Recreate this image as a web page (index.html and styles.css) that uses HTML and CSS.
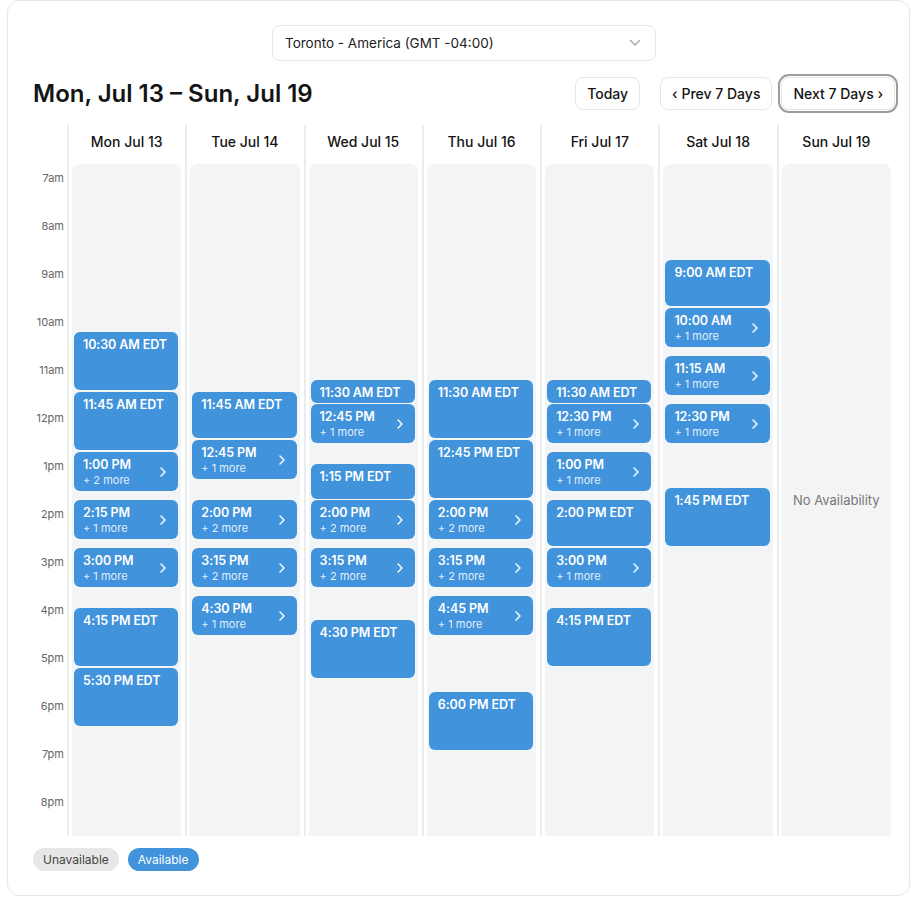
FILE: index.html
```html
<!DOCTYPE html>
<html lang="en">
<head>
  <meta charset="UTF-8" />
  <meta name="viewport" content="width=device-width, initial-scale=1" />
  <title>Availability</title>
  <link rel="stylesheet" href="styles.css">
</head>
<body>
  <div class="card">
    <div class="tz-row">
      <div class="tz-select">
        <span>Toronto - America (GMT -04:00)</span>
        <svg width="12" height="8" viewBox="0 0 12 8"><path d="M1.5 1.5l4.5 4.5 4.5-4.5" fill="none" stroke="#a3a3a3" stroke-width="1.3" stroke-linecap="round" stroke-linejoin="round"/></svg>
      </div>
    </div>

    <div class="toolbar">
      <h1>Mon, Jul 13 – Sun, Jul 19</h1>
      <div class="nav">
        <button class="today">Today</button>
        <button>‹ Prev 7 Days</button>
        <button class="focused">Next 7 Days ›</button>
      </div>
    </div>

    <div class="week" id="week">
      <div class="gutter">
        <div class="gutter-head"></div>
        <div class="hour">7am</div>
        <div class="hour">8am</div>
        <div class="hour">9am</div>
        <div class="hour">10am</div>
        <div class="hour">11am</div>
        <div class="hour">12pm</div>
        <div class="hour">1pm</div>
        <div class="hour">2pm</div>
        <div class="hour">3pm</div>
        <div class="hour">4pm</div>
        <div class="hour">5pm</div>
        <div class="hour">6pm</div>
        <div class="hour">7pm</div>
        <div class="hour">8pm</div>
      </div>
    </div>

    <div class="legend">
      <span class="pill off">Unavailable</span>
      <span class="pill on">Available</span>
    </div>
  </div>

  <script>
    // [top, height, time, extra]
    const days = [
      { label: 'Mon Jul 13', slots: [
        [168, 58, '10:30 AM EDT'], [228, 58, '11:45 AM EDT'], [288, 39, '1:00 PM', 2],
        [336, 39, '2:15 PM', 1], [384, 39, '3:00 PM', 1], [444, 58, '4:15 PM EDT'], [504, 58, '5:30 PM EDT']
      ]},
      { label: 'Tue Jul 14', slots: [
        [228, 46, '11:45 AM EDT'], [276, 39, '12:45 PM', 1], [336, 39, '2:00 PM', 2],
        [384, 39, '3:15 PM', 2], [432, 39, '4:30 PM', 1]
      ]},
      { label: 'Wed Jul 15', slots: [
        [216, 23, '11:30 AM EDT'], [240, 39, '12:45 PM', 1], [300, 35, '1:15 PM EDT'],
        [336, 39, '2:00 PM', 2], [384, 39, '3:15 PM', 2], [456, 58, '4:30 PM EDT']
      ]},
      { label: 'Thu Jul 16', slots: [
        [216, 58, '11:30 AM EDT'], [276, 58, '12:45 PM EDT'], [336, 39, '2:00 PM', 2],
        [384, 39, '3:15 PM', 2], [432, 39, '4:45 PM', 1], [528, 58, '6:00 PM EDT']
      ]},
      { label: 'Fri Jul 17', slots: [
        [216, 23, '11:30 AM EDT'], [240, 39, '12:30 PM', 1], [288, 39, '1:00 PM', 1],
        [336, 46, '2:00 PM EDT'], [384, 39, '3:00 PM', 1], [444, 58, '4:15 PM EDT']
      ]},
      { label: 'Sat Jul 18', slots: [
        [96, 46, '9:00 AM EDT'], [144, 39, '10:00 AM', 1], [192, 39, '11:15 AM', 1],
        [240, 39, '12:30 PM', 1], [324, 58, '1:45 PM EDT']
      ]},
      { label: 'Sun Jul 19', slots: [] }
    ];

    const chevron = '<svg width="6" height="10" viewBox="0 0 6 10"><path d="M1 1l4 4-4 4" fill="none" stroke="#fff" stroke-width="1.4" stroke-linecap="round" stroke-linejoin="round"/></svg>';
    const week = document.getElementById('week');

    days.forEach(day => {
      const col = document.createElement('div');
      col.className = 'day';

      let body = '';
      day.slots.forEach(s => {
        const pos = `top:${s[0]}px;height:${s[1]}px`;
        if (s[3]) {
          body += `<div class="slot group" style="${pos}"><div><div class="time">${s[2]}</div><div class="more">+ ${s[3]} more</div></div>${chevron}</div>`;
        } else {
          body += `<div class="slot" style="${pos}"><div class="time">${s[2]}</div></div>`;
        }
      });
      if (!day.slots.length) {
        body = '<div class="none">No Availability</div>';
      }

      col.innerHTML = `<div class="day-head">${day.label}</div><div class="day-body">${body}</div>`;
      week.appendChild(col);
    });
  </script>
</body>
</html>
```

FILE: styles.css
```css
body {
  margin: 0;
  padding: 0 2px 0 7px;
  background-color: #fff;
  color: #141414;
  font-family: Inter, 'Noto Sans', sans-serif;
}
.card {
  height: 896px;
  box-sizing: border-box;
  border: 1px solid #e6e6e6;
  border-radius: 12px;
  padding: 24px 14px 0 25px;
}
.tz-row {
  display: flex;
  justify-content: center;
}
.tz-select {
  width: 384px;
  height: 36px;
  box-sizing: border-box;
  border: 1px solid #e6e6e6;
  border-radius: 8px;
  padding: 0 14px 0 12px;
  display: flex;
  align-items: center;
  justify-content: space-between;
  font-size: 13.5px;
  color: #222;
}
.toolbar {
  margin-top: 16px;
  height: 33px;
  display: flex;
  align-items: center;
  justify-content: space-between;
}
h1 {
  margin: 0;
  font-size: 24px;
  font-weight: 600;
}
.nav {
  display: flex;
  gap: 9px;
}
button {
  height: 33px;
  padding: 0 11px;
  border: 1px solid #e6e6e6;
  border-radius: 8px;
  background-color: #fff;
  color: #141414;
  font-family: inherit;
  font-size: 14px;
  font-weight: 500;
}
.today {
  margin-right: 11px;
}
.focused {
  outline: 2px solid #9c9c9c;
  outline-offset: 1px;
}
.week {
  margin-top: 15px;
  display: grid;
  grid-template-columns: 34px repeat(7, 1fr);
}
.gutter-head {
  height: 39px;
}
.hour {
  height: 48px;
  box-sizing: border-box;
  padding: 8px 3px 0 0;
  text-align: right;
  font-size: 11px;
  line-height: 12px;
  color: #666;
}
.day {
  min-width: 0;
  border-left: 2px solid #ececec;
  padding: 0 4px 0 3px;
}
.day-head {
  height: 39px;
  box-sizing: border-box;
  padding-bottom: 7px;
  display: flex;
  align-items: center;
  justify-content: center;
  font-size: 14px;
  font-weight: 500;
}
.day-body {
  position: relative;
  height: 672px;
  background-color: #f3f4f5;
  border-radius: 8px 8px 0 0;
}
.slot {
  position: absolute;
  left: 2px;
  right: 3px;
  box-sizing: border-box;
  padding: 5px 9px;
  background-color: #4193dc;
  border-radius: 6px;
  color: #fff;
  overflow: hidden;
}
.slot.group {
  display: flex;
  align-items: center;
  justify-content: space-between;
  padding: 0 12px 0 9px;
}
.time {
  font-size: 12.5px;
  line-height: 16px;
  font-weight: 600;
  letter-spacing: -0.1px;
  white-space: nowrap;
}
.more {
  font-size: 11px;
  line-height: 14px;
  opacity: 0.85;
}
.none {
  height: 100%;
  display: flex;
  align-items: center;
  justify-content: center;
  font-size: 13px;
  color: #777;
}
.legend {
  margin-top: 12px;
  display: flex;
  gap: 9px;
}
.pill {
  height: 23px;
  line-height: 23px;
  padding: 0 10px;
  border-radius: 12px;
  font-size: 12px;
}
.off {
  background-color: #e7e7e7;
  color: #444;
}
.on {
  background-color: #4193dc;
  color: #fff;
}
```
